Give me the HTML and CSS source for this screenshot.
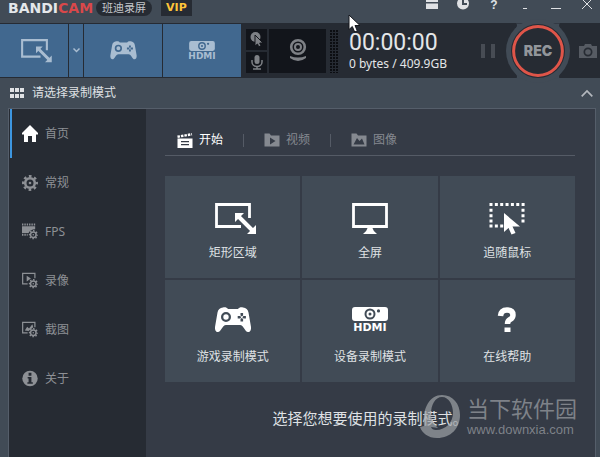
FILE: index.html
```html
<!DOCTYPE html>
<html lang="zh-CN">
<head>
<meta charset="utf-8">
<title>Bandicam</title>
<link rel="stylesheet" href="styles.css">
</head>
<body>
<svg class="sprite" aria-hidden="true">
  <symbol id="i-rect" viewBox="0 0 36 32" overflow="visible">
    <path d="M26 23.500H1.500v-22h33V15" fill="none" stroke="currentColor" stroke-width="2.800"/>
    <path d="M24 14l13 13" stroke="currentColor" stroke-width="4"/>
    <path d="M20 10h9l-9 9zM41 31h-9l9-9z" fill="currentColor"/>
  </symbol>
  <symbol id="i-pad" viewBox="0 0 36 26">
    <path fill="currentColor" fill-rule="evenodd" d="M8 .5C10 0 12 .5 13 2h10c1-1.500 3-2 5-1.500 3 .5 5 2 5.500 5L36 20c.3 3-1 5-3 5-3 0-4.500-7-8-7H11c-3.500 0-5 7-8 7-2 0-3.300-2-3-5L2.500 5.500C3 2.500 5 1 8 .5zM11 5a5 5 0 1 0 0 10 5 5 0 0 0 0-10zM11 7.300a2.700 2.700 0 1 1 0 5.400 2.700 2.700 0 0 1 0-5.400zM25.500 6v2.500l1.300 1 1.300-1V6zM25.500 12v2.500h2.600V12l-1.300-1zM22.700 9v2.600h2.500l1-1.300-1-1.300zM28.400 9l-1 1.300 1 1.300h2.500V9z"/>
  </symbol>
  <symbol id="i-projector" viewBox="0 0 36 14">
    <path fill="currentColor" fill-rule="evenodd" d="M3 0h30q3 0 3 3v8q0 3-3 3H3q-3 0-3-3V3q0-3 3-3zM18 1.500a5.500 5.500 0 1 0 0 11 5.500 5.500 0 0 0 0-11zM18 3.500a3.500 3.500 0 1 1 0 7 3.500 3.500 0 0 1 0-7zM18 5.500a1.500 1.500 0 1 0 0 3 1.500 1.500 0 0 0 0-3zM26.500 2.300a1.600 1.600 0 1 0 0 3.200 1.600 1.600 0 0 0 0-3.200z"/>
  </symbol>
  <symbol id="i-gear" viewBox="0 0 16 16">
    <circle cx="8" cy="8" r="4.800" fill="none" stroke="currentColor" stroke-width="2.600"/>
    <circle cx="8" cy="8" r="6.800" fill="none" stroke="currentColor" stroke-width="2.400" stroke-dasharray="2.670 2.670" stroke-dashoffset="1.330"/>
    <circle cx="8" cy="8" r="1.300" fill="currentColor"/>
  </symbol>
  <symbol id="i-pointer" viewBox="0 0 16 22">
    <path d="M0 0v19l4.500-4 3 6.500 4-1.500-3-6.500H16z" fill="currentColor"/>
  </symbol>
</svg>

<div class="window">
  <header class="titlebar">
    <h1 class="brand">BANDI<span>CAM</span></h1>
    <span class="pill">班迪录屏</span>
    <span class="vip">VIP</span>
    <div class="window-tools">
      <button aria-label="打开文件夹"><svg width="14" height="14" viewBox="0 0 14 14"><path d="M1 2h5l2 2h5v2H1zM1 7.500h12V13H1z" fill="currentColor"/></svg></button>
      <button aria-label="定时录制"><svg width="14" height="14" viewBox="0 0 14 14"><circle cx="7" cy="7.500" r="6" fill="currentColor"/><path d="M7 3v5h4" fill="none" stroke="#414b56" stroke-width="2"/></svg></button>
      <button aria-label="帮助" class="help">?</button>
      <button aria-label="托盘"><svg width="14" height="14" viewBox="0 0 14 14"><path d="M5 12.500h4" stroke="currentColor"/></svg></button>
      <button aria-label="最小化"><svg width="14" height="14" viewBox="0 0 14 14"><path d="M2 12.500h10" stroke="currentColor"/></svg></button>
      <button aria-label="关闭"><svg width="14" height="14" viewBox="0 0 14 14"><path d="M2 3l10 10M12 3L2 13" stroke="currentColor"/></svg></button>
    </div>
  </header>

  <section class="toolbar">
    <button class="mode mode-rect" aria-label="矩形区域"><svg width="27" height="24"><use href="#i-rect"/></svg></button>
    <button class="mode mode-more" aria-label="更多"><svg width="7" height="5" viewBox="0 0 7 5"><path d="M.5 .5l3 3 3-3" fill="none" stroke="currentColor" stroke-width="1.500"/></svg></button>
    <button class="mode" aria-label="游戏录制"><svg width="27" height="19"><use href="#i-pad"/></svg></button>
    <button class="mode" aria-label="设备录制"><svg width="26" height="10"><use href="#i-projector"/></svg><span class="hdmi">HDMI</span></button>
    <div class="inputs">
      <button aria-label="鼠标效果"><svg width="14" height="15" viewBox="0 0 14 15"><circle cx="5.500" cy="5" r="5" fill="currentColor"/><path d="M5 3v11l2.500-2 1.200 2.800 2.300-1L9.700 11H13z" fill="currentColor" stroke="#12151b"/></svg></button>
      <button aria-label="麦克风"><svg width="12" height="15" viewBox="0 0 12 15"><rect x="3.500" width="5" height="9" rx="2.500" fill="currentColor"/><path d="M1 5v2a5 4.500 0 0 0 10 0V5M6 11v3M2 14h8" fill="none" stroke="currentColor" stroke-width="1.500"/></svg></button>
      <button class="webcam" aria-label="摄像头"><svg width="16" height="23" viewBox="0 0 16 23"><circle cx="8" cy="8" r="6.800" fill="none" stroke="currentColor" stroke-width="2.600"/><circle cx="8" cy="8" r="3" fill="none" stroke="currentColor" stroke-width="2"/><path d="M0 17q8 3 16 0v2q-8 6-16 0z" fill="currentColor"/></svg></button>
    </div>
    <div class="meter"></div>
    <div class="status">
      <div class="timer">00:00:00</div>
      <div class="size">0 bytes / 409.9GB</div>
    </div>
    <button class="pause" aria-label="暂停"><svg width="14" height="14" viewBox="0 0 14 14"><path d="M0 0h4v14H0zM10 0h4v14h-4z" fill="currentColor"/></svg></button>
    <button class="rec"><svg width="64" height="66" viewBox="0 0 64 66"><path d="M10 5.500h44q-2 1 0 4.500v46q-2 3.500 0 4.500H10q2-1 0-4.500V10q2-3.500 0-4.500z" fill="#414b56"/><circle cx="32" cy="33" r="32" fill="#414b56"/><circle cx="32" cy="33" r="27" fill="#262b33"/><circle cx="32" cy="33" r="24.400" fill="none" stroke="#df5549" stroke-width="3"/></svg><span>REC</span></button>
    <button class="camera" aria-label="截图"><svg width="18" height="14" viewBox="0 0 18 14"><path fill="currentColor" fill-rule="evenodd" d="M0 2h5l1-2h6l1 2h5v12H0zM9 3.500a4.500 4.500 0 1 0 0 9 4.500 4.500 0 0 0 0-9z"/><circle cx="9" cy="8" r="2.800" fill="currentColor"/></svg></button>
  </section>

  <button class="section-head">
    <svg width="14" height="10" viewBox="0 0 14 10"><path d="M0 0h4v4H0zM5 0h4v4H5zM10 0h4v4h-4zM0 6h4v4H0zM5 6h4v4H5zM10 6h4v4h-4z" fill="#dfe1e4"/></svg>
    <span>请选择录制模式</span>
    <svg class="collapse" width="12" height="7" viewBox="0 0 12 7"><path d="M.7 6.300L6 1l5.300 5.300" fill="none" stroke="#b4b8be" stroke-width="1.700"/></svg>
  </button>

  <div class="panel">
    <nav class="sidebar">
      <a href="#home" class="active"><svg width="16" height="17" viewBox="0 0 16 17"><path d="M8 0l8 8v1.500h-2V17h-4v-6H6v6H2V9.500H0V8z" fill="currentColor"/></svg><span>首页</span></a>
      <a href="#general"><svg width="16" height="16"><use href="#i-gear"/></svg><span>常规</span></a>
      <a href="#fps"><svg width="17" height="17" viewBox="0 0 17 17"><path d="M0 1h14" stroke="currentColor" stroke-width="2" stroke-dasharray="1.500 1"/><path d="M0 3h14v3q-5 0-7 4H0z" fill="currentColor"/><path d="M0 12h6" stroke="currentColor" stroke-width="2" stroke-dasharray="1.500 1"/><use href="#i-gear" x="7" y="7" width="10" height="10"/></svg><span>FPS</span></a>
      <a href="#video"><svg width="17" height="17" viewBox="0 0 17 17"><path d="M6 12H.7V1h13v5" fill="none" stroke="currentColor" stroke-width="1.300"/><path d="M5 3.500L9.500 6.500 5 9.500z" fill="currentColor"/><use href="#i-gear" x="7" y="7" width="10" height="10"/></svg><span>录像</span></a>
      <a href="#image"><svg width="17" height="17" viewBox="0 0 17 17"><path d="M6 12H.7V1h13v5" fill="none" stroke="currentColor" stroke-width="1.300"/><path d="M3 9.500l2.500-4 2 2L11 3l1 3-5 4z" fill="currentColor"/><use href="#i-gear" x="7" y="7" width="10" height="10"/></svg><span>截图</span></a>
      <a href="#about"><svg width="17" height="17" viewBox="0 0 17 17"><circle cx="8.500" cy="8.500" r="8.200" fill="currentColor"/><path d="M7 2.500h3v3H7zM6 7h4v5.500h1.500v1.700H5.700v-1.700H7V8.500H6z" fill="#262b33"/></svg><span>关于</span></a>
    </nav>

    <main class="content">
      <div class="tabs">
        <button class="active"><svg width="16" height="15" viewBox="0 0 16 15"><path fill="currentColor" fill-rule="evenodd" d="M.5 5.500h15V15H.5zM4 8v1.200h8V8zM4 11v1.200h8V11z"/><path d="M.5 3.800L15 1.200" stroke="currentColor" stroke-width="2.400" stroke-dasharray="2.500 1"/></svg><span>开始</span></button>
        <i></i>
        <button><svg width="16" height="14" viewBox="0 0 16 14"><path fill="currentColor" fill-rule="evenodd" d="M.5 .5h5l1.500 2h8.500v11H.5zM6 4.500v7L11.500 8z"/></svg><span>视频</span></button>
        <i></i>
        <button><svg width="16" height="14" viewBox="0 0 16 14"><path fill="currentColor" fill-rule="evenodd" d="M.5 .5h5l1.500 2h8.500v11H.5zM2.500 11.500h11L11 5.500 8.500 8 6 5z"/></svg><span>图像</span></button>
      </div>
      <div class="cards">
        <button><span class="art"><svg width="36" height="32"><use href="#i-rect"/></svg></span><span>矩形区域</span></button>
        <button><span class="art"><svg width="36" height="32" viewBox="0 0 36 32"><path d="M1.500 1.500h33v22h-33z" fill="none" stroke="currentColor" stroke-width="2.800"/><path d="M16 24h4q1 4 5 7H11q4-3 5-7z" fill="currentColor"/></svg></span><span>全屏</span></button>
        <button><span class="art"><svg width="36" height="32" viewBox="0 0 36 32"><path d="M.5 1.500H36M.5 23H15M2 5.800V20M34 5.800V20" fill="none" stroke="currentColor" stroke-width="3" stroke-dasharray="3 2.350"/><use href="#i-pointer" x="15" y="10" width="16" height="22"/></svg></span><span>追随鼠标</span></button>
        <button><span class="art"><svg width="36" height="26"><use href="#i-pad"/></svg></span><span>游戏录制模式</span></button>
        <button><span class="art"><svg width="36" height="14"><use href="#i-projector"/></svg><b class="hdmi">HDMI</b></span><span>设备录制模式</span></button>
        <button><span class="art"><svg width="20" height="26" viewBox="0 0 20 26"><path d="M3.500 9Q4 3 10 3t6 5q0 3-3 4.500-2.500 1.200-2.500 4.500" fill="none" stroke="currentColor" stroke-width="5.500"/><path d="M7.500 20.500h6V25h-6z" fill="currentColor"/></svg></span><span>在线帮助</span></button>
      </div>
      <p class="hint">选择您想要使用的录制模式。</p>
    </main>
  </div>

  <div class="watermark">
    <svg width="42" height="45" viewBox="0 0 42 45"><path fill="currentColor" fill-rule="evenodd" d="M23 1c11 0 18 9 18 20C41 34 32 44 18 44 9 44 3 39 1 33l4-1C3 14 11 1 23 1zM23 3c-7 0-11 8-11 17 0 6 3 10 7 14l-7-1q1 3 5 3c10 0 17-8 17-17 0-8-4-16-11-16z"/></svg>
    <div><strong>当下软件园</strong><small>www.downxia.com</small></div>
  </div>
  <svg class="cursor" width="13" height="19" viewBox="0 0 13 19"><path d="M1 1v14.500l3.300-3 2.400 5.500 2.600-1.200L7 11.500h5z" fill="#fff" stroke="#14171c"/></svg>
</div>
</body>
</html>
```
FILE: styles.css
```css
* {
  box-sizing: border-box;
}

body {
  margin: 0;
  background: #414b56;
  color: #dfe1e4;
  font: 12px/16px "Noto Sans", "Noto Sans CJK SC", sans-serif;
}

button {
  margin: 0;
  padding: 0;
  border: 0;
  background: none;
  color: inherit;
  font: inherit;
}

svg {
  display: block;
  flex: none;
  overflow: visible;
}

.sprite {
  position: absolute;
  width: 0;
  height: 0;
}

.window {
  position: relative;
  display: flex;
  flex-direction: column;
  height: 100vh;
  overflow: hidden;
}

/* Title bar */
.titlebar {
  display: flex;
  align-items: flex-start;
  height: 23px;
  padding: 0 6px 0 8px;
}

.brand {
  margin: 0;
  color: #e4e7ea;
  font: bold 14px/16px "DejaVu Sans", sans-serif;
}

.brand span {
  color: #d9484a;
}

.pill {
  margin-left: 3px;
  padding: 0 6px;
  border-radius: 8px;
  background: #262b33;
  color: #c3c6ca;
  font-size: 11px;
}

.vip {
  margin-left: 9px;
  padding: 0 5px;
  background: #262b33;
  color: #ffc53a;
  font: bold 11px/16px "DejaVu Sans", sans-serif;
}

.window-tools {
  display: flex;
  align-items: flex-end;
  gap: 17px;
  margin: -4px 0 0 auto;
  color: #dfe1e4;
}

.window-tools button {
  width: 14px;
  height: 14px;
}

.window-tools .help {
  height: 10px;
  font: bold 12px/10px "Liberation Sans", sans-serif;
}

/* Recording toolbar */
.toolbar {
  display: flex;
  align-items: center;
  height: 55px;
  padding: 1px 3px 1px 0;
  background: #262b33;
}

.mode {
  display: flex;
  flex-direction: column;
  align-items: center;
  justify-content: center;
  align-self: stretch;
  width: 78px;
  margin-right: 1px;
  background: #41688f;
  color: #a9bdd1;
}

.mode-rect {
  width: 68px;
}

.mode-more {
  width: 14px;
}

.hdmi {
  font: bold 9px/10px "DejaVu Sans", sans-serif;
}

.inputs {
  display: grid;
  grid-template: 21px 21px / 21px 57px;
  gap: 2px;
  margin-left: 4px;
  color: #7e8186;
}

.inputs button {
  display: grid;
  place-items: center;
  background: #12151b;
}

.inputs .webcam {
  grid-area: 1 / 2 / 3 / 3;
}

.meter {
  width: 9px;
  height: 44px;
  margin-left: 4px;
  background: repeating-linear-gradient(#262b33 0 1px, transparent 1px 3px), repeating-linear-gradient(90deg, #0c0e12 0 2px, #262b33 2px 3px);
}

.status {
  margin-left: 10px;
  color: #e4e6e8;
}

.timer {
  font: 23px/26px Roboto, sans-serif;
}

.size {
  font: 12px/16px "Noto Sans", sans-serif;
}

.pause {
  margin-left: auto;
  color: #474c54;
}

.rec {
  display: grid;
  place-items: center;
  margin: 0 9px 0 11px;
  color: #92969b;
  font: 900 14px/18px Inter, sans-serif;
}

.rec > * {
  grid-area: 1 / 1;
}

.camera {
  color: #565b63;
}

/* Mode heading */
.section-head {
  display: flex;
  align-items: center;
  gap: 8px;
  height: 30px;
  padding: 0 7px 0 10px;
}

.collapse {
  margin-left: auto;
}

/* Main panel */
.panel {
  display: flex;
  flex: 1;
  min-height: 0;
  margin: 0 4px 0 8px;
  border: 1px solid #555e6a;
  border-bottom: 0;
  background: #353b46;
}

.sidebar {
  width: 137px;
  padding-left: 1px;
  background: #262b33;
}

.sidebar a {
  display: flex;
  align-items: center;
  gap: 7px;
  height: 49px;
  padding-left: 10px;
  border-left: 2px solid transparent;
  color: #8d9095;
  text-decoration: none;
}

.sidebar svg {
  width: 16px;
}

.sidebar .active {
  border-color: #3d96e0;
}

.sidebar .active svg {
  color: #fff;
}

.content {
  flex: 1;
  padding: 16px 20px 0 19px;
}

.tabs {
  display: flex;
  align-items: center;
  gap: 20px;
  height: 31px;
  padding-left: 12px;
  border-bottom: 1px solid #555b66;
  color: #858990;
}

.tabs button {
  display: flex;
  align-items: center;
  gap: 6px;
}

.tabs .active {
  color: #fff;
}

.tabs i {
  width: 1px;
  height: 13px;
  background: #555b66;
}

.cards {
  display: grid;
  grid-template-columns: repeat(3, 1fr);
  gap: 2px;
  margin-top: 20px;
}

.cards button {
  display: flex;
  flex-direction: column;
  align-items: center;
  height: 102px;
  padding-top: 27px;
  background: #414b56;
}

.art {
  height: 42px;
  color: #fff;
}

.art .hdmi {
  display: block;
  font-size: 11px;
  line-height: 14px;
}

.hint {
  margin: 26px 0 0;
  color: #dfe1e4;
  font-size: 15px;
  line-height: 20px;
  text-align: center;
}

/* Overlays */
.watermark {
  position: absolute;
  right: 23px;
  bottom: 18px;
  display: flex;
  align-items: center;
  gap: 6px;
  color: #a0a3a8b0;
}

.watermark strong,
.watermark small {
  display: block;
}

.watermark strong {
  font-size: 22px;
  font-weight: 400;
  line-height: 26px;
}

.watermark small {
  font: 13px/18px "Liberation Sans", sans-serif;
}

.cursor {
  position: absolute;
  top: 14px;
  left: 348px;
}
```
